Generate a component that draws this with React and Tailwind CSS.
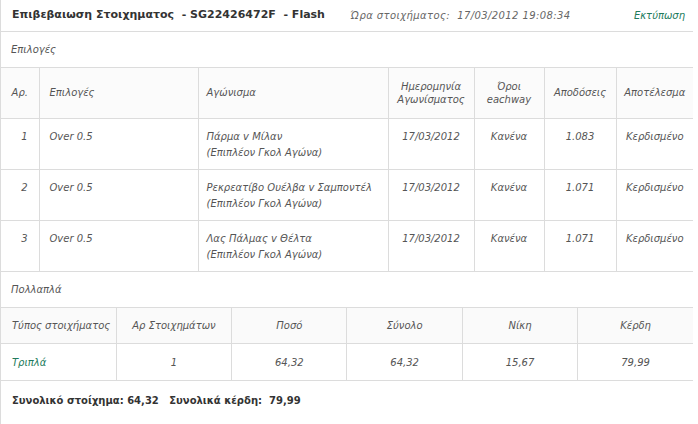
export default function App() {
  const selections = [
    { n: 1, pick: 'Over 0.5', match: 'Πάρμα v Μίλαν', odds: '1.083' },
    { n: 2, pick: 'Over 0.5', match: 'Ρεκρεατίβο Ουέλβα v Σαμποντέλ', odds: '1.071' },
    { n: 3, pick: 'Over 0.5', match: 'Λας Πάλμας v Θέλτα', odds: '1.071' },
  ];

  const cell = 'border-l border-[#dcdcdc] first:border-l-0';

  return (
    <div
      className="w-[698px] h-[424px] bg-white text-[#555] text-[10px] overflow-hidden"
      style={{ fontFamily: '"DejaVu Sans", Verdana, sans-serif' }}
    >
      <div className="w-[693px] border-l border-[#dcdcdc] h-full">
        {/* header */}
        <div className="h-[32px] flex items-center pl-[11px] pr-[8px] border-b border-[#dcdcdc]">
          <span className="w-[338px] shrink-0 whitespace-nowrap font-bold text-[11px] text-[#333]">
            Επιβεβαιωση Στοιχηματος&nbsp; - SG22426472F&nbsp; - Flash
          </span>
          <span className="italic text-[10px] text-[#666] tracking-[0.4px]">
            Ώρα στοιχήματος:&nbsp; 17/03/2012 19:08:34
          </span>
          <span className="italic text-[10px] text-[#217a5b] ml-auto">Εκτύπωση</span>
        </div>

        <div className="h-[36px] flex items-center pl-[10px] italic border-b border-[#dcdcdc]">
          Επιλογές
        </div>

        <table className="w-full table-fixed border-collapse italic">
          <colgroup>
            <col className="w-[38px]" />
            <col className="w-[159px]" />
            <col className="w-[190px]" />
            <col className="w-[86px]" />
            <col className="w-[70px]" />
            <col className="w-[72px]" />
            <col />
          </colgroup>
          <thead>
            <tr className="h-[50px] bg-[#fbfbfb] border-b border-[#dcdcdc] leading-[13px]">
              <th className={`${cell} font-normal text-center`}>Αρ.</th>
              <th className={`${cell} font-normal text-left pl-[10px]`}>Επιλογές</th>
              <th className={`${cell} font-normal text-left pl-[8px]`}>Αγώνισμα</th>
              <th className={`${cell} font-normal text-center`}>Ημερομηνία<br />Αγωνίσματος</th>
              <th className={`${cell} font-normal text-center`}>Όροι<br />eachway</th>
              <th className={`${cell} font-normal text-center`}>Αποδόσεις</th>
              <th className={`${cell} font-normal text-center`}>Αποτέλεσμα</th>
            </tr>
          </thead>
          <tbody>
            {selections.map((s) => (
              <tr key={s.n} className="h-[51px] border-b border-[#dcdcdc] align-top leading-[16px]">
                <td className={`${cell} text-right pr-[11px] pt-[10px]`}>{s.n}</td>
                <td className={`${cell} pl-[10px] pt-[10px]`}>{s.pick}</td>
                <td className={`${cell} pl-[8px] pt-[10px]`}>
                  {s.match}
                  <br />
                  (Επιπλέον Γκολ Αγώνα)
                </td>
                <td className={`${cell} text-center pt-[10px]`}>17/03/2012</td>
                <td className={`${cell} text-center pt-[10px]`}>Κανένα</td>
                <td className={`${cell} text-center pt-[10px]`}>{s.odds}</td>
                <td className={`${cell} text-center pt-[10px]`}>Κερδισμένο</td>
              </tr>
            ))}
          </tbody>
        </table>

        <div className="h-[36px] flex items-center pl-[10px] italic border-b border-[#dcdcdc]">
          Πολλαπλά
        </div>

        <table className="w-full table-fixed border-collapse italic">
          <tbody>
            <tr className="h-[36px] bg-[#fafafa] border-b border-[#dcdcdc]">
              <td className={`${cell} pl-[11px]`}>Τύπος στοιχήματος</td>
              <td className={`${cell} text-center`}>Αρ Στοιχημάτων</td>
              <td className={`${cell} text-center`}>Ποσό</td>
              <td className={`${cell} text-center`}>Σύνολο</td>
              <td className={`${cell} text-center`}>Νίκη</td>
              <td className={`${cell} text-center`}>Κέρδη</td>
            </tr>
            <tr className="h-[37px] border-b border-[#dcdcdc]">
              <td className={`${cell} pl-[11px] text-[#217a5b]`}>Τριπλά</td>
              <td className={`${cell} text-center`}>1</td>
              <td className={`${cell} text-center`}>64,32</td>
              <td className={`${cell} text-center`}>64,32</td>
              <td className={`${cell} text-center`}>15,67</td>
              <td className={`${cell} text-center`}>79,99</td>
            </tr>
          </tbody>
        </table>

        <div className="h-[38px] flex items-center pl-[11px] font-bold text-[10px] text-[#333]">
          Συνολικό στοίχημα: 64,32&nbsp;&nbsp; Συνολικά κέρδη:&nbsp; 79,99
        </div>
      </div>
    </div>
  );
}
